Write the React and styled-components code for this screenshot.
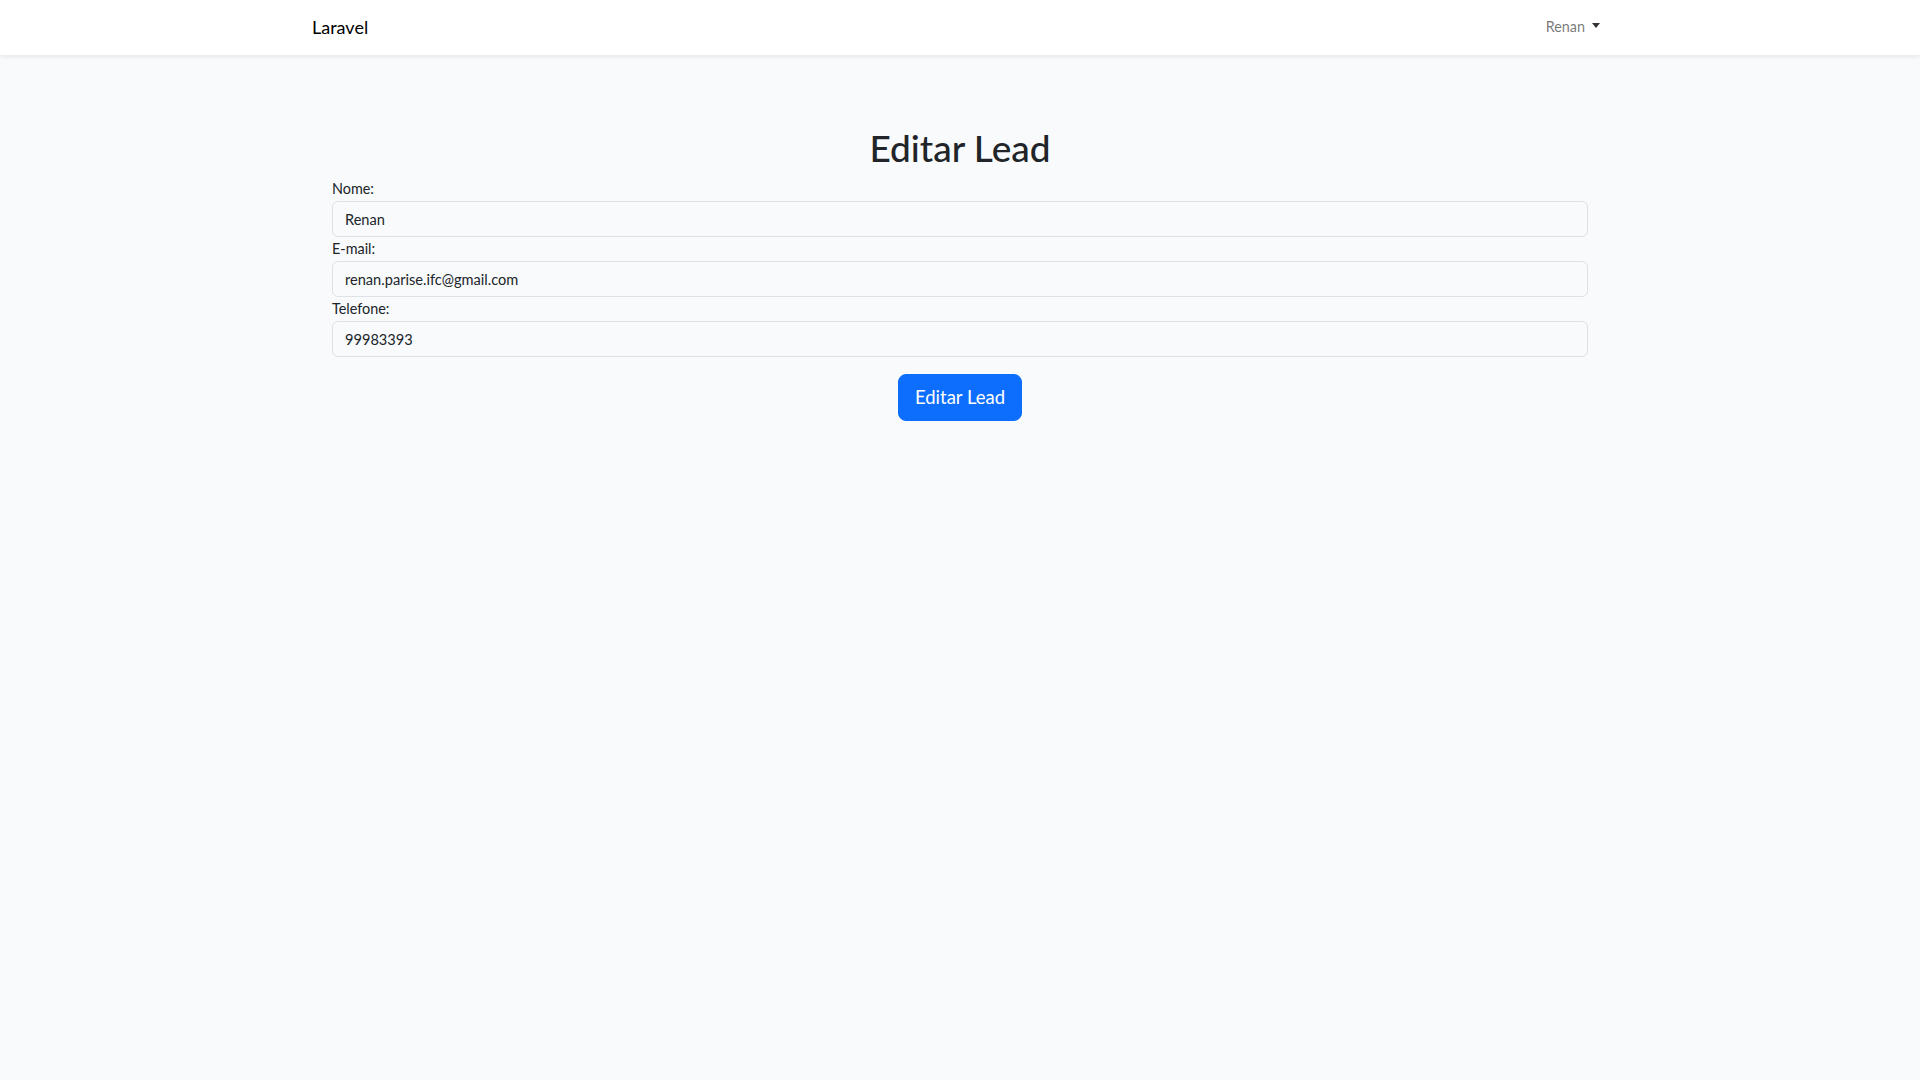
import React, { useState } from "react";
import styled, { createGlobalStyle } from "styled-components";

const GlobalStyle = createGlobalStyle`
  * { box-sizing: border-box; }
  body {
    margin: 0;
    background: #f8fafc;
    font-family: Lato, "Noto Sans", "Liberation Sans", sans-serif;
    font-size: 14.4px;
    line-height: 1.6;
    color: #212529;
  }
`;

const Navbar = styled.nav`
  height: 55px;
  background: #fff;
  box-shadow: 0 2px 4px rgba(0, 0, 0, 0.075);
`;

const NavInner = styled.div`
  max-width: 1320px;
  height: 100%;
  margin: 0 auto;
  padding: 0 12px;
  display: flex;
  align-items: center;
  justify-content: space-between;
`;

const Brand = styled.a`
  font-size: 18px;
  color: #000;
  text-decoration: none;
  padding-bottom: 1px;
`;

const UserMenu = styled.button`
  display: flex;
  align-items: center;
  gap: 7px;
  border: 0;
  background: none;
  font: inherit;
  font-size: 14.4px;
  color: rgba(0, 0, 0, 0.55);
  padding: 0 8px 2px 0;
  cursor: pointer;

  &::after {
    content: "";
    border-top: 5px solid #333;
    border-left: 4px solid transparent;
    border-right: 4px solid transparent;
    margin-top: -2px;
  }
`;

const Main = styled.main`
  padding: 24px 0;
`;

const Wrapper = styled.div`
  max-width: 1320px;
  margin: 0 auto;
  padding: 0 32px;
`;

const Title = styled.h1`
  margin: 47px 0 7px;
  font-size: 37px;
  font-weight: 500;
  line-height: 1.2;
  text-align: center;
`;

const Form = styled.form`
  display: flex;
  flex-direction: column;
`;

const Label = styled.label`
  display: block;
  height: 24px;
  line-height: 24px;
  font-size: 14.4px;
`;

const Input = styled.input`
  display: block;
  width: 100%;
  height: 36px;
  padding: 0 12px;
  font: inherit;
  font-size: 14.6px;
  color: #212529;
  background: #f8fafc;
  border: 1px solid #dee2e6;
  border-radius: 6px;
  outline: none;
`;

const Actions = styled.div`
  display: flex;
  justify-content: center;
  margin-top: 17px;
`;

const Button = styled.button`
  height: 47px;
  padding: 0 16px;
  font: inherit;
  font-size: 18.5px;
  color: #fff;
  background: #0d6efd;
  border: 1px solid #0d6efd;
  border-radius: 8px;
  cursor: pointer;
`;

export default function App() {
  const [lead, setLead] = useState({
    nome: "Renan",
    email: "renan.parise.ifc@gmail.com",
    telefone: "99983393",
  });

  const update = (key) => (e) => setLead({ ...lead, [key]: e.target.value });

  return (
    <>
      <GlobalStyle />
      <Navbar>
        <NavInner>
          <Brand href="#">Laravel</Brand>
          <UserMenu type="button">Renan</UserMenu>
        </NavInner>
      </Navbar>
      <Main>
        <Wrapper>
          <Title>Editar Lead</Title>
          <Form onSubmit={(e) => e.preventDefault()}>
            <Label htmlFor="nome">Nome:</Label>
            <Input id="nome" value={lead.nome} onChange={update("nome")} />
            <Label htmlFor="email">E-mail:</Label>
            <Input id="email" value={lead.email} onChange={update("email")} />
            <Label htmlFor="telefone">Telefone:</Label>
            <Input id="telefone" value={lead.telefone} onChange={update("telefone")} />
            <Actions>
              <Button type="submit">Editar Lead</Button>
            </Actions>
          </Form>
        </Wrapper>
      </Main>
    </>
  );
}
